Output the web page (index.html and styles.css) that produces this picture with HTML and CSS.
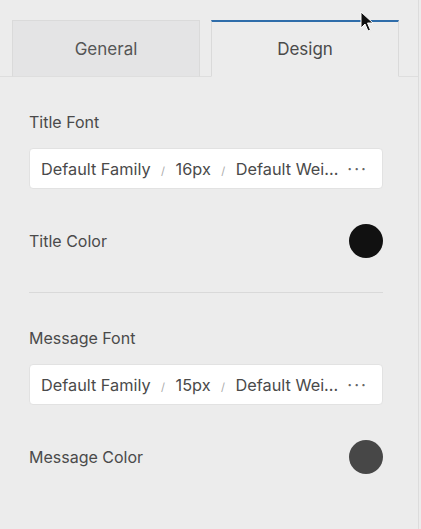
FILE: index.html
```html
<!DOCTYPE html>
<html lang="en">
<head>
    <meta charset="UTF-8">
    <meta name="viewport" content="width=device-width, initial-scale=1.0">
    <title>Design Settings</title>
    <link rel="stylesheet" href="styles.css">
</head>
<body>
    <div class="panel">
        <!-- Tabs -->
        <div class="tabs">
            <button class="tab">General</button>
            <button class="tab active">Design</button>
        </div>

        <div class="content">
            <!-- Title settings -->
            <div class="field">
                <label class="label">Title Font</label>
                <div class="font-box">
                    <span>Default Family</span>
                    <span class="sep">/</span>
                    <span>16px</span>
                    <span class="sep">/</span>
                    <span>Default Wei...</span>
                    <span class="more">&middot;&middot;&middot;</span>
                </div>
            </div>
            <div class="color-row">
                <span class="label">Title Color</span>
                <span class="swatch dark"></span>
            </div>

            <hr class="divider">

            <!-- Message settings -->
            <div class="field">
                <label class="label">Message Font</label>
                <div class="font-box">
                    <span>Default Family</span>
                    <span class="sep">/</span>
                    <span>15px</span>
                    <span class="sep">/</span>
                    <span>Default Wei...</span>
                    <span class="more">&middot;&middot;&middot;</span>
                </div>
            </div>
            <div class="color-row">
                <span class="label">Message Color</span>
                <span class="swatch grey"></span>
            </div>
        </div>
    </div>

    <!-- mouse pointer from the capture -->
    <svg class="cursor" width="14" height="22" viewBox="0 0 14 22">
        <path d="M1 1 L1 17 L5 13 L8 20 L10.5 19 L7.5 12 L13 12 Z" fill="#111" stroke="#fff" stroke-width="1"/>
    </svg>
</body>
</html>
```

FILE: styles.css
```css
body {
    margin: 0;
    padding: 0;
    background-color: #ececec;
    font-family: Inter, "Noto Sans", sans-serif;
    color: #4a4a4a;
}

.panel {
    width: 419px;
    min-height: 529px;
    border-right: 1px solid #dcdcdc;
    box-sizing: border-box;
}

.tabs {
    display: flex;
    gap: 11px;
    padding: 20px 0 0 12px;
    border-bottom: 1px solid #dedede;
}

.tab {
    width: 188px;
    height: 57px;
    margin-bottom: -1px;
    font-family: inherit;
    font-size: 17px;
    color: #555;
    background-color: #e4e4e5;
    border: 1px solid #dadada;
    border-bottom: 1px solid #dedede;
    padding: 0;
}

.tab.active {
    background-color: #ececec;
    border-top: 2px solid #2f6daa;
    border-bottom-color: #ececec;
    color: #4a4a4a;
}

.content {
    padding: 35px 35px 0 29px;
}

.label {
    display: block;
    font-size: 16px;
    line-height: 20px;
    color: #4a4a4a;
}

.font-box {
    display: flex;
    align-items: center;
    height: 41px;
    margin-top: 16px;
    padding: 0 14px 0 11px;
    background: white;
    border: 1px solid #e2e2e2;
    border-radius: 4px;
    box-sizing: border-box;
    font-size: 16.3px;
    color: #4a4a4a;
    white-space: nowrap;
}

.font-box .sep {
    font-size: 11px;
    color: #aaa;
    margin: 4px 10.5px 0;
}

.font-box .more {
    flex-shrink: 0;
    margin-left: auto;
    font-size: 17px;
    letter-spacing: 2px;
    color: #666;
}

.color-row {
    display: flex;
    align-items: center;
    justify-content: space-between;
    height: 34px;
    margin-top: 35px;
}

.swatch {
    width: 34px;
    height: 34px;
    border-radius: 50%;
}

.swatch.dark {
    background-color: #111111;
}

.swatch.grey {
    background-color: #474747;
}

.divider {
    border: none;
    border-top: 1px solid #d9d9d9;
    margin: 34px 0 35px;
}

.cursor {
    position: absolute;
    left: 360px;
    top: 11px;
}
```
